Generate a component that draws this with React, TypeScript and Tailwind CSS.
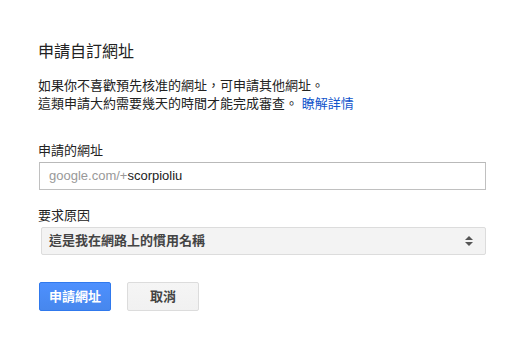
import { useState } from 'react'

const cjk = "font-['Liberation_Sans','Noto_Sans_CJK_TC',sans-serif]"

function App() {
  const [reason, setReason] = useState('這是我在網路上的慣用名稱')

  return (
    <div className={`w-[527px] h-[346px] bg-white text-[#222] ${cjk}`}>
      <div className="pt-[40px] pl-[38px] w-[486px]">
        <h1 className="text-[16px] leading-[24px] font-normal text-[#222]">申請自訂網址</h1>

        <p className="mt-[13px] text-[13px] leading-[18px] text-[#222]">
          如果你不喜歡預先核准的網址，可申請其他網址。
          <br />
          這類申請大約需要幾天的時間才能完成審查。 <a className="text-[#15c]">瞭解詳情</a>
        </p>

        <div className="mt-[29px] text-[13px] leading-[18px]">申請的網址</div>
        <div className="mt-[2px] ml-px h-[28px] border border-[#c0c0c0] border-t-[#b9b9b9] flex items-center pl-[9px] text-[13px]">
          <span className="text-[#999]">google.com/+</span>
          <span className="text-[#222]">scorpioliu</span>
        </div>

        <div className="mt-[17px] text-[13px] leading-[18px]">要求原因</div>
        <div className="mt-[2px] ml-[3px] h-[28px] rounded-[2px] border border-[#dcdcdc] bg-[#f3f3f3] flex items-center justify-between pl-[7px] pr-[12px]">
          <span className="text-[13px] font-bold text-[#444]">{reason}</span>
          <button onClick={() => setReason(reason)} className="flex flex-col items-center gap-[2px]">
            <svg width="8" height="4" viewBox="0 0 8 4">
              <path d="M0 4 L4 0 L8 4 Z" fill="#555" />
            </svg>
            <svg width="8" height="4" viewBox="0 0 8 4">
              <path d="M0 0 L8 0 L4 4 Z" fill="#555" />
            </svg>
          </button>
        </div>

        <div className="mt-[27px] ml-px flex gap-[16px]">
          <button className="w-[72px] h-[29px] rounded-[2px] border border-[#3079ed] bg-gradient-to-b from-[#4d90fe] to-[#4787ed] text-white text-[13px] font-bold">
            申請網址
          </button>
          <button className="w-[72px] h-[29px] rounded-[2px] border border-[#dcdcdc] bg-gradient-to-b from-[#f5f5f5] to-[#f1f1f1] text-[#444] text-[13px] font-bold">
            取消
          </button>
        </div>
      </div>
    </div>
  )
}

export default App
